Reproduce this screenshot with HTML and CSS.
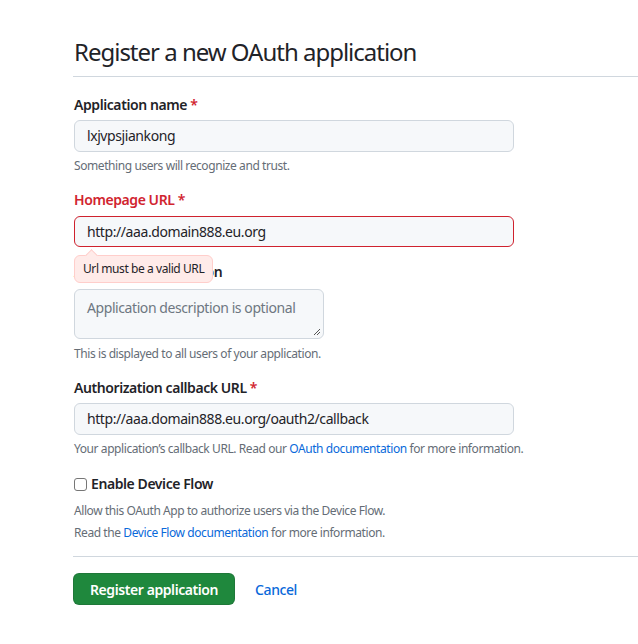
FILE: index.html
```html
<!DOCTYPE html>
<html lang="en">
<head>
<meta charset="utf-8">
<title>Register a new OAuth application</title>
<link rel="stylesheet" href="styles.css">
</head>
<body>
<main class="page">
  <h1 class="title">Register a new OAuth application</h1>
  <form class="form">
    <div class="group">
      <label class="label">Application name <span class="req">*</span></label>
      <div class="input">lxjvpsjiankong</div>
      <p class="note">Something users will recognize and trust.</p>
    </div>
    <div class="group error">
      <label class="label label-error">Homepage URL <span class="req">*</span></label>
      <div class="input input-error">http://aaa.domain888.eu.org</div>
      <div class="desc-wrap">
        <label class="label">Application description</label>
        <div class="tooltip">Url must be a valid URL</div>
      </div>
    </div>
    <div class="group group-desc">
      <div class="textarea">Application description is optional
        <svg class="grip" width="8" height="8" viewBox="0 0 8 8"><path d="M7 1 L1 7 M7 4 L4 7" stroke="#555" stroke-width="1" fill="none"/></svg>
      </div>
      <p class="note">This is displayed to all users of your application.</p>
    </div>
    <div class="group">
      <label class="label">Authorization callback URL <span class="req">*</span></label>
      <div class="input">http://aaa.domain888.eu.org/oauth2/callback</div>
      <p class="note">Your application’s callback URL. Read our <a class="link" href="#">OAuth documentation</a> for more information.</p>
    </div>
    <div class="group check-group">
      <label class="check"><span class="box"></span>Enable Device Flow</label>
      <p class="note">Allow this OAuth App to authorize users via the Device Flow.</p>
      <p class="note">Read the <a class="link" href="#">Device Flow documentation</a> for more information.</p>
    </div>
    <div class="actions">
      <button type="button" class="btn">Register application</button>
      <a class="cancel" href="#">Cancel</a>
    </div>
  </form>
</main>
</body>
</html>
```
FILE: styles.css
```css
* { box-sizing: border-box; }
html, body { margin: 0; padding: 0; background: #fff; }
body {
  font-family: "Noto Sans", "Segoe UI", "Liberation Sans", sans-serif;
  color: #1f2328;
  font-size: 14px;
  letter-spacing: -0.03em;
}
.page { padding: 0 0 0 74px; }
.title {
  margin: 0;
  padding: 36px 0 8px 0;
  font-size: 24px;
  font-weight: 400;
  line-height: 32px;
  letter-spacing: -0.042em;
  border-bottom: 1px solid #d0d7de;
  margin-left: -1px;
  padding-left: 1px;
}
.form { padding-top: 17px; }
.group { margin-bottom: 14px; }
.label {
  display: block;
  font-weight: 600;
  line-height: 22px;
  margin-bottom: 4px;
}
.req { color: #d1242f; }
.label-error { color: #d1242f; margin-bottom: 5px; }
.input {
  width: 440px;
  height: 32px;
  padding: 0 12px;
  background: #f6f8fa;
  border: 1px solid #d0d7de;
  border-radius: 6px;
  line-height: 30px;
  font-size: 14px;
}
.input-error { border-color: #cf222e; height: 31px; line-height: 29px; }
.note {
  margin: 5px 0 0 0;
  font-size: 12px;
  color: #656d76;
  line-height: 18px;
}
.desc-wrap { position: relative; margin-top: 14px; }
.desc-wrap .label { margin-bottom: 6px; }
.tooltip {
  position: absolute;
  left: 0;
  top: -6px;
  padding: 5px 8px;
  background: #ffebe9;
  border: 1px solid #ffcecb;
  border-radius: 6px;
  font-size: 12px;
  line-height: 16px;
  color: #1f2328;
  white-space: nowrap;
}
.tooltip::before {
  content: "";
  position: absolute;
  top: -5px;
  left: 12px;
  width: 8px;
  height: 8px;
  background: #ffebe9;
  border-left: 1px solid #ffcecb;
  border-top: 1px solid #ffcecb;
  transform: rotate(45deg);
}
.error { margin-bottom: 0; }
.textarea {
  position: relative;
  width: 250px;
  height: 50px;
  padding: 8px 12px;
  background: #f6f8fa;
  border: 1px solid #d0d7de;
  border-radius: 6px;
  color: #6e7781;
  line-height: 20px;
}
.group-desc .note { margin-top: 6px; }
.grip { position: absolute; right: 2px; bottom: 2px; }
.check {
  display: flex;
  align-items: center;
  gap: 4px;
  font-weight: 600;
  line-height: 22px;
}
.box {
  width: 13px;
  height: 13px;
  border: 1px solid #767676;
  border-radius: 3px;
  background: #fff;
}
.check-group { margin-top: 15px; margin-bottom: 14px; }
.check-group .note { margin-top: 4px; }
.check-group .check + .note { margin-top: 7px; }
.link { color: #0969da; text-decoration: none; }
.actions {
  border-top: 1px solid #d0d7de;
  margin-left: -1px;
  padding: 16px 0 0 0;
  display: flex;
  align-items: center;
  gap: 20px;
}
.btn {
  height: 32px;
  padding: 0 16px;
  background: #1f883d;
  color: #fff;
  border: 1px solid rgba(31,35,40,0.15);
  border-radius: 6px;
  font-family: inherit;
  font-size: 14px;
  font-weight: 600;
  letter-spacing: -0.03em;
}
.cancel { color: #0969da; text-decoration: none; font-weight: 500; }
```
